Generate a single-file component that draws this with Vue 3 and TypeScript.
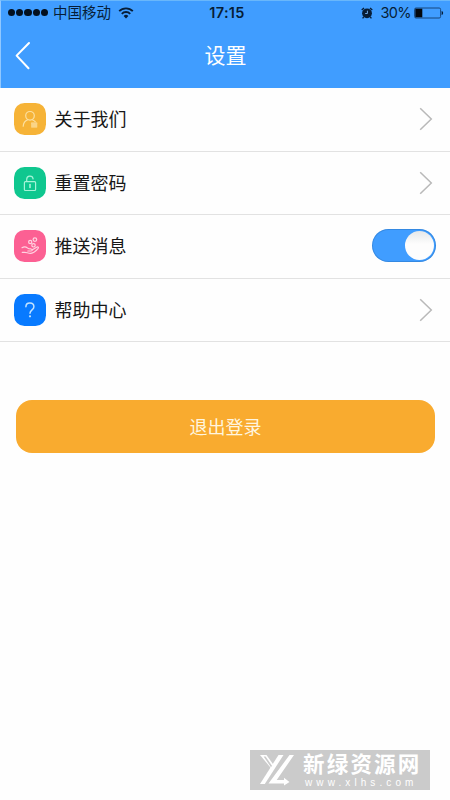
<script setup lang="ts">
import { ref } from 'vue'

type IconName = 'about' | 'lock' | 'push' | 'help'
interface Item {
  icon: IconName
  label: string
  toggle?: boolean
}

const items: Item[] = [
  { icon: 'about', label: '关于我们' },
  { icon: 'lock', label: '重置密码' },
  { icon: 'push', label: '推送消息', toggle: true },
  { icon: 'help', label: '帮助中心' },
]
const pushOn = ref(true)
</script>

<template>
  <div class="screen">
    <header class="header">
      <div class="status">
        <div class="carrier">
          <span class="dots"><i v-for="n in 5" :key="n"></i></span>
          <span class="operator">中国移动</span>
          <svg class="wifi" width="16" height="12" viewBox="0 0 16 12" fill="none" stroke="#071d36" stroke-width="1.9">
            <path d="M1.2 4.2a9.6 9.6 0 0 1 13.6 0" />
            <path d="M3.8 6.8a5.9 5.9 0 0 1 8.4 0" />
            <path d="M8 11.4 5.6 9a3.4 3.4 0 0 1 4.8 0z" fill="#071d36" stroke="none" />
          </svg>
        </div>
        <span class="clock">17:15</span>
        <div class="power">
          <svg width="12" height="12" viewBox="0 0 12 12">
            <circle cx="6" cy="6.3" r="4.9" fill="#071d36" />
            <path d="M.7 3 3 .9M11.3 3 9 .9M2.7 10 1.6 11.3M9.3 10l1.1 1.3" stroke="#071d36" stroke-width="1.3" />
            <path d="M6.4 3.7v2.8H4.2" fill="none" stroke="#6fa9e8" stroke-width="1" />
          </svg>
          <span class="percent">30%</span>
          <svg width="30" height="12" viewBox="0 0 30 12">
            <rect x=".6" y="1" width="26" height="10" rx="1.4" fill="none" stroke="#17477d" stroke-width="1" />
            <rect x="1.3" y="1.7" width="7" height="8.6" fill="#03070c" />
            <path d="M27.6 4c2 .6 2 3.4 0 4z" fill="#071d36" />
          </svg>
        </div>
      </div>
      <div class="navbar">
        <svg class="back" width="16" height="30" viewBox="0 0 16 30" fill="none" stroke="#fff" stroke-width="2" stroke-linecap="round" stroke-linejoin="round">
          <path d="M14 2 1.6 14.6 13.5 27.3" />
        </svg>
        <h1>设置</h1>
      </div>
    </header>

    <main>
      <ul class="list">
        <li v-for="item in items" :key="item.icon" class="row">
          <span class="badge" :class="item.icon">
            <svg width="32" height="32" viewBox="0 0 32 32" fill="none" stroke-width="1.2" stroke-linecap="round" stroke-linejoin="round">
              <template v-if="item.icon === 'about'">
                <circle cx="16" cy="12.8" r="4.3" />
                <path d="M9.2 23.2c.2-3.5 1.8-5.5 4.6-6.5M18.2 16.7c1.2.4 2.2 1 3 2" />
                <path d="M17.6 20.2h5.2M17.6 22h5.2M17.6 23.8h5.2" stroke-width="1.3" />
              </template>
              <template v-else-if="item.icon === 'lock'">
                <rect x="10.4" y="14.7" width="11.2" height="8.8" rx="1" />
                <path d="M12.7 14.5v-2.2c0-4.2 6-4.3 6.4-.4" />
                <path d="M16 17.6v2.8" stroke-width="1.6" />
              </template>
              <template v-else-if="item.icon === 'push'">
                <circle cx="20.9" cy="9.6" r="1.8" />
                <circle cx="16.2" cy="12" r="1.6" />
                <circle cx="19.5" cy="15.3" r="1.7" />
                <path d="M8 17.7c2.2-1.4 4-1 5.7.4 1 .8 2.1.8 3.3.9 1.8.2 1.7 1.9 0 2h-3.2M18 20l4.6-2.8c1.5-.9 2.4.4 1.4 1.5-2.5 3-4.5 4.5-7.2 4.6-2.5.1-4.2-1-6.1-1H8.2" />
              </template>
              <template v-else>
                <path d="M11.9 12.7c.1-5.1 8-4.9 8 .1 0 3.2-3.9 3-3.9 6.5" stroke-width="1.5" />
                <circle cx="16" cy="22.3" r=".5" />
              </template>
            </svg>
          </span>
          <span class="label">{{ item.label }}</span>
          <button v-if="item.toggle" class="switch" :class="{ on: pushOn }" role="switch" :aria-checked="pushOn" @click="pushOn = !pushOn">
            <span class="knob"></span>
          </button>
          <svg v-else class="chevron" width="14" height="24" viewBox="0 0 14 24" fill="none" stroke="#b9b9b9" stroke-width="1.5">
            <path d="M1.2 1.2 12.3 12 1.2 22.8" />
          </svg>
        </li>
      </ul>
      <button class="logout">退出登录</button>
    </main>

    <aside class="watermark">
      <svg width="35" height="31" viewBox="0 0 35 31" fill="#fff">
        <path d="M0 0h6.5l8 11.2-2.4 3.3z" />
        <path d="M18.5 0h5L4.8 29H0z" />
        <path d="M29.5 0H34L16.7 25H24v-2.2l5.5 4.2-5.5 3.6V28.5H8.5z" />
        <path d="M3.6 1.6h2L12 10.8l-1 1.4z" fill="#cbcbcb" />
      </svg>
      <div class="brand">
        <strong>新绿资源网</strong>
        <span>www.xlhs.com</span>
      </div>
    </aside>
  </div>
</template>

<style>
body {
  background: #fff;
}
</style>

<style scoped>
.screen {
  position: relative;
  box-sizing: border-box;
  width: 450px;
  height: 800px;
  overflow: hidden;
  background: #fefefe;
  font-family: "Liberation Sans", "Noto Sans CJK SC", sans-serif;
  color: #171717;
}
.header {
  box-sizing: border-box;
  height: 88px;
  border-top: 1px solid #69b7fb;
  border-left: 1px solid #91c8ff;
  background: #409dff;
}
.status {
  display: grid;
  grid-template-columns: 1fr auto 1fr;
  align-items: center;
  height: 23px;
  padding: 0 6px 0 7px;
  color: #071d36;
}
.carrier,
.power,
.dots {
  display: flex;
  align-items: center;
}
.dots {
  gap: 1px;
}
.dots i {
  width: 7.2px;
  height: 7.2px;
  border-radius: 50%;
  background: #03101f;
}
.operator {
  margin-left: 5px;
  padding-top: 1px;
  font-size: 14.5px;
  line-height: 20px;
}
.wifi {
  margin-left: 7px;
}
.clock {
  margin-left: 2px;
  font: 600 14.5px Inter, sans-serif;
  letter-spacing: 0.3px;
}
.power {
  justify-content: flex-end;
}
.percent {
  margin: 0 3px 0 7px;
  font: 400 14.5px Inter, sans-serif;
  letter-spacing: -0.6px;
}
.navbar {
  display: grid;
  grid-template-columns: 48px 1fr 48px;
  align-items: center;
  height: 64px;
}
.back {
  margin-left: 14px;
}
h1 {
  margin: 0;
  padding-bottom: 1px;
  color: #fff;
  font-size: 21px;
  font-weight: 400;
  line-height: 30px;
  text-align: center;
}
.list {
  margin: 0;
  padding: 0;
  list-style: none;
}
.row {
  box-sizing: border-box;
  display: flex;
  align-items: center;
  height: 63.6px;
  padding: 0 14px 0 13.5px;
  border-bottom: 1.5px solid #e2e2e2;
}
.badge {
  width: 32px;
  height: 32px;
  border-radius: 10.5px;
}
.badge svg {
  display: block;
}
.about {
  background: #f6b337;
  stroke: #fbe0a2;
}
.lock {
  background: #0fc78f;
  stroke: #a7f3d8;
}
.push {
  background: #fc6093;
  stroke: #ffd3e1;
}
.help {
  background: #087aff;
  stroke: #c1e2ff;
}
.label {
  flex: 1;
  margin-left: 9px;
  padding-top: 2px;
  font-size: 18px;
  line-height: 26px;
}
.chevron {
  margin-right: 3px;
}
.switch {
  display: flex;
  box-sizing: border-box;
  width: 64px;
  height: 33px;
  margin-bottom: 2px;
  padding: 2px;
  border: 0;
  border-radius: 17px;
  background: #c9c9c9;
  box-shadow: inset 0 0 0 1px rgba(26, 92, 158, 0.3);
}
.switch.on {
  justify-content: flex-end;
  background: #409dff;
}
.knob {
  width: 29px;
  height: 29px;
  border-radius: 50%;
  background: linear-gradient(#e6e8e9, #fdfdfd 45%);
}
.logout {
  display: block;
  width: 419px;
  height: 53px;
  margin: 58px 0 0 16px;
  padding: 0 0 2px;
  border: 0;
  border-radius: 16px;
  background: #f9ab2f;
  color: #fff5df;
  font: inherit;
  font-size: 18px;
}
.watermark {
  position: absolute;
  right: 20px;
  bottom: 10px;
  display: flex;
  box-sizing: border-box;
  width: 180px;
  height: 40px;
  padding: 5px 0 0 10px;
  background: #cbcbcb;
  color: #fff;
}
.brand {
  display: flex;
  flex-direction: column;
  margin: -1px 0 0 8px;
}
.brand strong {
  font-size: 21.5px;
  font-weight: 700;
  line-height: 22px;
  letter-spacing: 2.2px;
  white-space: nowrap;
}
.brand span {
  margin: 2px 0 0 2px;
  font-size: 10px;
  font-weight: 400;
  line-height: 10px;
  letter-spacing: 4.1px;
}
</style>
